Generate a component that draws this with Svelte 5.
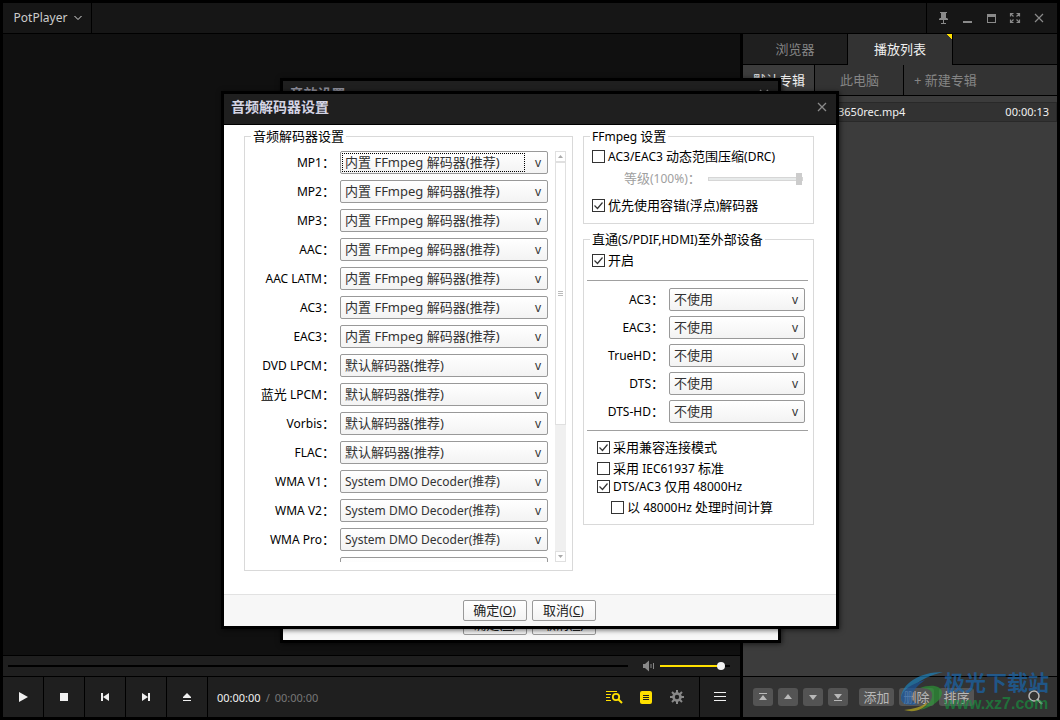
<script lang="ts">
    const full = '内置 FFmpeg 解码器(推荐)';
    const standard = '默认解码器(推荐)';
    const system = 'System DMO Decoder(推荐)';

    const decoders = [
        { name: 'MP1', value: full },
        { name: 'MP2', value: full },
        { name: 'MP3', value: full },
        { name: 'AAC', value: full },
        { name: 'AAC LATM', value: full },
        { name: 'AC3', value: full },
        { name: 'EAC3', value: full },
        { name: 'DVD LPCM', value: standard },
        { name: '蓝光 LPCM', value: standard },
        { name: 'Vorbis', value: standard },
        { name: 'FLAC', value: standard },
        { name: 'WMA V1', value: system },
        { name: 'WMA V2', value: system },
        { name: 'WMA Pro', value: system },
        { name: '', value: '' },
    ];

    const outputs = ['AC3', 'EAC3', 'TrueHD', 'DTS', 'DTS-HD'];

    const windowIcons = [
        { label: '置顶', path: 'M4 1h7v1h-1v5h1l1 1v1H8v3h2v1H5v-1h2V9H3V8l1-1h1V2H4z', fill: true },
        { label: '最小化', path: 'M3 10h9v2H3z', fill: true },
        { label: '最大化', path: 'M3 3h9v9H3zM4 6v5h7V6z', fill: true },
        { label: '全屏', path: 'M5.5 5.5l-3-3M2.5 5.5v-3h3M8.5 5.5l3-3M8.5 2.5h3v3M5.5 8.5l-3 3M2.5 8.5v3h3M8.5 8.5l3 3M11.5 8.5v3h-3', fill: false },
        { label: '关闭', path: 'M3 3l8 8M11 3l-8 8', fill: false },
    ];

    const transport = [
        { label: '播放', path: 'M3 2l9 5-9 5z' },
        { label: '停止', path: 'M3 3h8v8H3z' },
        { label: '上一个', path: 'M3 3h2v8H3zM11 3v8L5 7z' },
        { label: '下一个', path: 'M9 3h2v8H9zM3 3v8l6-4z' },
        { label: '打开', path: 'M7 3l4 4v1H3V7zM3 10h8v1H3z' },
    ];

    const moves = [
        { label: '移到顶部', path: 'M3 3h8v1H3zM7 5l4 5H3z' },
        { label: '上移', path: 'M7 4l4 5H3z' },
        { label: '下移', path: 'M3 5h8l-4 5z' },
        { label: '移到底部', path: 'M3 4h8l-4 5zM3 10h8v1H3z' },
    ];

    // latin text is set one size below the chinese text
    function runs(text: string) {
        return text.match(/[\u3000-\uffef]+|[^\u3000-\uffef]+/g) ?? [];
    }
</script>

<style>
    :global(body) {
        background: #000;
        font-family: "Noto Sans", "Noto Sans CJK SC", sans-serif;
    }

    .player, .player :global(*) {
        box-sizing: border-box;
    }

    .player {
        position: relative;
        display: flex;
        flex-direction: column;
        height: 100vh;
        border: 3px solid #000;
        overflow: hidden;
        font-size: 12px;
        line-height: 18px;
        color: #e8e8e8;
    }

    button, select, input {
        font: inherit;
        color: inherit;
        margin: 0;
    }

    button {
        display: flex;
        align-items: center;
        justify-content: center;
        padding: 0;
        border: 0;
        background: none;
        white-space: nowrap;
    }

    svg {
        display: block;
    }

    .cjk {
        font-size: 13px;
    }

    /* title bar */
    .titlebar {
        display: flex;
        flex: none;
        height: 31px;
        background: #161616;
        border-bottom: 1px solid #000;
    }
        .titlebar .app {
            width: 89px;
            gap: 7px;
            padding-left: 2px;
            border-right: 1px solid #000;
            color: #ccc;
        }
        .titlebar .tools {
            display: flex;
            align-items: center;
            margin-left: auto;
            padding: 0 6px 0 4px;
            border-left: 1px solid #000;
            color: #8a8a8a;
        }
        .tools button {
            width: 24px;
            height: 24px;
        }

    .columns {
        display: flex;
        flex: 1;
        min-height: 0;
    }

    /* video side */
    .stage {
        display: flex;
        flex-direction: column;
        flex: 1;
        border-right: 3px solid #000;
        min-width: 0;
    }
        .video {
            flex: 1;
            background: #101010;
        }
        .seekbar {
            display: flex;
            align-items: center;
            height: 22px;
            padding: 0 10px 0 5px;
            border: solid #000;
            border-width: 1px 0;
            background: #1f1f1f;
        }

    input[type="range"] {
        appearance: none;
        height: 12px;
        background: none;
    }
    input[type="range"]::-webkit-slider-thumb {
        appearance: none;
    }
        .seek {
            flex: 1;
            min-width: 0;
        }
        .seek::-webkit-slider-runnable-track {
            height: 2px;
            background: #000;
        }
        .seek::-webkit-slider-thumb {
            width: 1px;
            height: 2px;
        }
        .volume {
            width: 70px;
        }
        .volume::-webkit-slider-runnable-track {
            height: 2px;
            background: linear-gradient(90deg, #ffe000 87%, #000 87%);
        }
        .volume::-webkit-slider-thumb {
            width: 8px;
            height: 8px;
            margin-top: -3px;
            border-radius: 50%;
            background: #f0f0f0;
        }
    .speaker {
        margin: 0 5px 0 14px;
    }

    .controls {
        display: flex;
        align-items: stretch;
        height: 40px;
        background: #1f1f1f;
        color: #f0f0f0;
    }
        .controls .key {
            width: 41px;
            border-right: 1px solid #000;
        }
        .controls .menu {
            width: 41px;
            border-left: 1px solid #000;
        }
        .time {
            display: flex;
            align-items: center;
            gap: 5px;
            padding: 2px 0 0 9px;
            font-size: 11px;
        }
        .time .total {
            color: #777;
        }
        .extras {
            display: flex;
            align-items: center;
            gap: 17px;
            margin-left: auto;
            padding-right: 15px;
        }

    /* playlist side */
    .playlist {
        display: flex;
        flex-direction: column;
        width: 314px;
        background: #3c3c3c;
    }
        .tabs, .albums {
            display: flex;
            flex: none;
            height: 31px;
            background: #1f1f1f;
            font-size: 13px;
            color: #858585;
        }
        .tabs button {
            width: 105px;
            border-right: 1px solid #000;
            border-bottom: 1px solid #000;
        }
        .tabs .rest {
            flex: 1;
            border-bottom: 1px solid #000;
        }
        .tabs .active {
            padding-bottom: 2px;
            border-bottom: 0;
            background: linear-gradient(225deg, #ffe000 4px, #333 4px);
            color: #f0f0f0;
        }
        .albums {
            background: #333;
            border-bottom: 1px solid #000;
        }
        .albums button {
            padding: 0 9px 0 10px;
            border-right: 1px solid #000;
        }
        .albums .active {
            background: #3c3c3c;
            color: #f0f0f0;
        }
        .albums .pc {
            padding: 0 24px 0 25px;
        }
        .albums .new {
            border-right: 0;
        }
    .files {
        flex: 1;
        padding-top: 6px;
    }
        .file {
            display: flex;
            justify-content: space-between;
            height: 20px;
            padding: 0 7px 0 94px;
            border: 1px solid #292929;
            background: #323232;
            font-size: 11px;
            color: #f0f0f0;
        }
    .listbar {
        display: flex;
        align-items: center;
        gap: 5px;
        height: 41px;
        padding: 0 14px 0 10px;
        border-top: 1px solid #000;
        background: #333;
        color: #b8b8b8;
    }
        .listbar button {
            height: 18px;
            border-radius: 3px;
            background: #545454;
        }
        .listbar .move {
            width: 20px;
        }
        .listbar .word {
            width: 35px;
            font-size: 13px;
        }
        .listbar .first {
            margin-left: 6px;
        }
        .listbar .find {
            margin-left: auto;
            background: none;
        }

    /* dialogs float over the player */
    .layer {
        position: absolute;
        inset: -3px;
        display: grid;
        place-items: center;
    }
    .dialog {
        display: flex;
        flex-direction: column;
        border: 3px solid #000;
        background: #fff;
        box-shadow: 1px 1px 5px rgba(0, 0, 0, 0.6);
        color: #000;
    }
        .dialog.back {
            width: 501px;
            height: 565px;
        }
        .dialog.front {
            width: 618px;
        }
        .dialog header {
            display: flex;
            align-items: center;
            justify-content: space-between;
            height: 31px;
            padding: 0 8px 4px 7px;
            border-bottom: 1px solid #000;
            background: #1f1f1f;
            color: #8a8a8a;
        }
        .dialog h2 {
            margin: 0;
            font-size: 14px;
            line-height: 18px;
            color: #d4d4e4;
        }
        .back h2 {
            color: #8c8c98;
        }
        .dialog footer {
            display: flex;
            justify-content: center;
            gap: 5px;
            margin-top: auto;
            padding: 5px 2px 5px 0;
            border-top: 1px solid #e2e2e2;
            background: #f7f7f7;
        }
        .dialog footer button {
            width: 64px;
            height: 21px;
            border: 1px solid #999;
            border-radius: 2px;
            background: linear-gradient(#fff, #f3f3f3);
            color: #222;
        }

    .panes {
        display: grid;
        grid-template-columns: 329px 1fr;
        align-items: start;
        gap: 10px;
        padding: 2px 22px 23px 20px;
    }
    fieldset {
        min-width: 0;
        margin: 0;
        padding: 0;
        border: 1px solid #d9d9d9;
    }
        legend {
            margin-left: 6px;
            padding: 0 2px;
            height: 18px;
        }
        .decoders {
            display: flex;
            gap: 7px;
            padding: 6px 6px 8px 0;
        }

    .list {
        flex: 1;
        height: 411px;
        overflow: hidden;
    }
    .row {
        display: grid;
        grid-template-columns: 1fr 208px;
        align-items: center;
        gap: 5px;
        margin-bottom: 6px;
    }
        .row label {
            text-align: right;
            white-space: nowrap;
        }
        .row.output {
            grid-template-columns: 1fr 136px;
            margin-bottom: 5px;
        }

    .combo {
        display: grid;
        height: 23px;
        color: #333;
    }
        .combo > :global(*) {
            grid-area: 1 / 1;
        }
        .combo select {
            appearance: none;
            width: 100%;
            padding: 0 20px 2px 4px;
            border: 1px solid #999;
            border-radius: 2px;
            background: linear-gradient(#fff, #f3f3f3);
            font-size: 13px;
            outline: none;
        }
        .combo select.latin {
            padding-bottom: 0;
            font-size: 12px;
        }
        .combo .arrow {
            justify-self: end;
            align-self: center;
            margin-right: 7px;
            pointer-events: none;
        }
        .combo .focus {
            margin: 2px 23px 2px 2px;
            border: 1px dotted #000;
            pointer-events: none;
        }

    .scroll {
        display: flex;
        flex-direction: column;
        width: 11px;
        background: #f0f0f0;
    }
        .scroll span {
            display: flex;
            align-items: center;
            justify-content: center;
            height: 11px;
            border: 1px solid #e0e0e0;
            background: #fff;
        }
        .scroll .thumb {
            height: 263px;
        }
        .scroll .down {
            margin-top: auto;
        }

    .side {
        display: flex;
        flex-direction: column;
        gap: 6px;
    }
        .ffmpeg {
            padding: 2px 8px 9px;
        }
        .passthrough {
            padding: 3px 3px 8px;
        }
    .check {
        display: flex;
        align-items: center;
        gap: 3px;
        height: 18px;
        white-space: nowrap;
    }
        .check input {
            appearance: none;
            width: 13px;
            height: 13px;
            border: 1px solid #333;
            background: #fff;
        }
        .check input:checked {
            background: #fff url("data:image/svg+xml,%3Csvg xmlns='http://www.w3.org/2000/svg' viewBox='0 0 11 11'%3E%3Cpath d='M1.5 5.5l3 3 5-6' fill='none' stroke='%23333' stroke-width='1.2'/%3E%3C/svg%3E") center / 11px 11px;
        }
        .enable {
            padding-left: 5px;
        }
        .options {
            padding-left: 10px;
        }
        .options .spaced {
            margin-top: 3px;
        }
        .options .nested {
            padding-left: 14px;
        }
    .level {
        display: flex;
        align-items: center;
        justify-content: space-between;
        margin: 4px 0 8px;
        padding: 0 2px 0 32px;
        color: #a0a0a0;
    }
        .level input {
            width: 95px;
        }
        .level input::-webkit-slider-runnable-track {
            height: 4px;
            border: 1px solid #d6d6d6;
            background: #e7eaea;
        }
        .level input::-webkit-slider-thumb {
            width: 6px;
            height: 12px;
            margin-top: -5px;
            background: #ccc;
        }
    .rows {
        margin: 11px 2px 7px 0;
        padding: 7px 3px 2px 0;
        border: solid #a0a0a0;
        border-width: 1px 0;
    }

    /* site mark in the corner */
    .mark {
        position: absolute;
        right: 8px;
        bottom: 4px;
        display: flex;
        align-items: center;
        opacity: 0.65;
        pointer-events: none;
    }
        .mark div {
            display: flex;
            flex-direction: column;
        }
        .mark b {
            font-size: 21px;
            line-height: 25px;
            color: #1769b5;
        }
        .mark i {
            font: bold 16px/18px "Liberation Sans", sans-serif;
            color: #17913f;
        }
</style>

{#snippet mixed(text: string)}
    {#each runs(text) as run}<span class:cjk={run.charCodeAt(0) > 0x2fff}>{run}</span>{/each}
{/snippet}

{#snippet combo(id: string, value: string, focused: boolean)}
    <span class="combo">
        <select {id} class:latin={value === system}>
            <option>{value}</option>
        </select>
        {#if focused}<span class="focus"></span>{/if}
        {#if value}<span class="arrow">v</span>{/if}
    </span>
{/snippet}

{#snippet check(text: string, checked: boolean, cls: string)}
    <label class="check {cls}">
        <input type="checkbox" {checked}>
        <span>{@render mixed(text)}</span>
    </label>
{/snippet}

{#snippet cross()}
    <svg viewBox="0 0 12 12" width="12" height="12"><path d="M2 2l8 8M10 2l-8 8" fill="none" stroke="currentColor" stroke-width="1.3"/></svg>
{/snippet}

{#snippet buttons()}
    <footer>
        <button><span><span class="cjk">确定</span>(<u>O</u>)</span></button>
        <button><span><span class="cjk">取消</span>(<u>C</u>)</span></button>
    </footer>
{/snippet}

<div class="player">
    <div class="titlebar">
        <button class="app">
            PotPlayer
            <svg viewBox="0 0 8 6" width="8" height="6"><path d="M.5 1L4 4.5 7.5 1" fill="none" stroke="#ddd"/></svg>
        </button>
        <div class="tools">
            {#each windowIcons as icon}
                <button aria-label={icon.label}>
                    <svg viewBox="0 0 14 14" width="14" height="14">
                        <path d={icon.path} fill={icon.fill ? 'currentColor' : 'none'} fill-rule="evenodd" stroke={icon.fill ? 'none' : 'currentColor'} stroke-width="1.2"/>
                    </svg>
                </button>
            {/each}
        </div>
    </div>

    <div class="columns">
        <div class="stage">
            <div class="video"></div>
            <div class="seekbar">
                <input class="seek" type="range" min="0" max="100" value="0" aria-label="进度">
                <svg class="speaker" viewBox="0 0 13 12" width="13" height="12">
                    <path d="M1 4h2l4-3.5v11L3 8H1z" fill="#888"/>
                    <path d="M9 4v4M11.5 3v6" stroke="#888"/>
                </svg>
                <input class="volume" type="range" min="0" max="100" value="92" aria-label="音量">
            </div>
            <div class="controls">
                {#each transport as key}
                    <button class="key" aria-label={key.label}>
                        <svg viewBox="0 0 14 14" width="14" height="14"><path d={key.path} fill="currentColor"/></svg>
                    </button>
                {/each}
                <div class="time"><span>00:00:00</span><span class="total">/</span><span class="total">00:00:00</span></div>
                <div class="extras">
                    <button aria-label="搜索列表">
                        <svg viewBox="0 0 17 14" width="17" height="14" fill="none" stroke="#ffe000">
                            <path d="M0 1.5h11M0 4.5h5M0 7.5h4M0 10.5h5"/>
                            <circle cx="10" cy="7" r="3.2" stroke-width="1.8"/>
                            <path d="M12 9l4 4" stroke-width="2"/>
                        </svg>
                    </button>
                    <button aria-label="播放列表">
                        <svg viewBox="0 0 13 14" width="13" height="14">
                            <rect y="1" width="12" height="13" rx="2" fill="#ffe000"/>
                            <path d="M3 5.5h6M3 7.5h6M3 9.5h6" stroke="#1f1f1f"/>
                        </svg>
                    </button>
                    <button aria-label="选项">
                        <svg viewBox="0 0 14 14" width="14" height="14" fill="none" stroke="#888">
                            <circle cx="7" cy="7" r="3.5" stroke-width="2.6"/>
                            <path d="M7 0v3M7 11v3M0 7h3M11 7h3M2 2l2 2M10 10l2 2M12 2l-2 2M4 10l-2 2" stroke-width="2"/>
                        </svg>
                    </button>
                </div>
                <button class="menu" aria-label="菜单">
                    <svg viewBox="0 0 12 10" width="12" height="10"><path d="M0 .5h12M0 4.5h12M0 8.5h12" stroke="currentColor"/></svg>
                </button>
            </div>
        </div>

        <div class="playlist">
            <div class="tabs">
                <button>浏览器</button>
                <button class="active">播放列表</button>
                <span class="rest"></span>
            </div>
            <div class="albums">
                <button class="active">默认专辑</button>
                <button class="pc">此电脑</button>
                <button class="new">+ 新建专辑</button>
            </div>
            <div class="files">
                <div class="file"><span>3650rec.mp4</span><span>00:00:13</span></div>
            </div>
            <div class="listbar">
                {#each moves as move}
                    <button class="move" aria-label={move.label}>
                        <svg viewBox="0 0 14 14" width="14" height="14"><path d={move.path} fill="currentColor"/></svg>
                    </button>
                {/each}
                <button class="word first">添加</button>
                <button class="word">删除</button>
                <button class="word">排序</button>
                <button class="find" aria-label="搜索">
                    <svg viewBox="0 0 16 16" width="16" height="16" fill="none" stroke="currentColor">
                        <circle cx="7" cy="7" r="5" stroke-width="1.5"/>
                        <path d="M10.5 10.5l4.5 4.5" stroke-width="2"/>
                    </svg>
                </button>
            </div>
        </div>
    </div>

    <div class="mark">
        <svg viewBox="0 0 44 42" width="44" height="42">
            <path d="M43 1C20 1 2 12 1 27c0 3 2 5 4 6 0-14 14-26 38-32z" fill="#1b86c4"/>
            <path d="M1 26c0 8 8 9 17 7-5-1-7-4-6-8 1-6 6-11 13-16C12 13 3 18 1 26z" fill="#1658a5"/>
            <path d="M20 17c10-4 22-3 22 5 0 7-10 14-22 17 8-5 13-10 12-16 0-4-5-6-12-6z" fill="#2a9a35"/>
            <path d="M28 31c-7 5-14 7-24 8 10 3 20 0 24-8z" fill="#c8b81e"/>
        </svg>
        <div><b>极光下载站</b><i>www.xz7.com</i></div>
    </div>

    <div class="layer">
        <section class="dialog back">
            <header><h2>音效设置</h2>{@render cross()}</header>
            {@render buttons()}
        </section>
    </div>

    <div class="layer">
        <section class="dialog front">
            <header>
                <h2>音频解码器设置</h2>
                <button aria-label="关闭">{@render cross()}</button>
            </header>
            <div class="panes">
                <fieldset>
                    <legend>{@render mixed('音频解码器设置')}</legend>
                    <div class="decoders">
                        <div class="list">
                            {#each decoders as decoder, i}
                                <div class="row">
                                    <label for="decoder-{i}">{@render mixed(decoder.name && decoder.name + '：')}</label>
                                    {@render combo(`decoder-${i}`, decoder.value, i === 0)}
                                </div>
                            {/each}
                        </div>
                        <div class="scroll">
                            <span><svg viewBox="0 0 5 3" width="5" height="3"><path d="M0 3h5L2.5 0z" fill="#aaa"/></svg></span>
                            <span class="thumb"><svg viewBox="0 0 5 5" width="5" height="5"><path d="M0 .5h5M0 2.5h5M0 4.5h5" stroke="#bbb"/></svg></span>
                            <span class="down"><svg viewBox="0 0 5 3" width="5" height="3"><path d="M0 0h5L2.5 3z" fill="#aaa"/></svg></span>
                        </div>
                    </div>
                </fieldset>

                <div class="side">
                    <fieldset>
                        <legend>{@render mixed('FFmpeg 设置')}</legend>
                        <div class="ffmpeg">
                            {@render check('AC3/EAC3 动态范围压缩(DRC)', false, '')}
                            <div class="level">
                                <label for="level">{@render mixed('等级(100%)：')}</label>
                                <input id="level" type="range" min="0" max="100" value="100" disabled>
                            </div>
                            {@render check('优先使用容错(浮点)解码器', true, '')}
                        </div>
                    </fieldset>
                    <fieldset>
                        <legend>{@render mixed('直通(S/PDIF,HDMI)至外部设备')}</legend>
                        <div class="passthrough">
                            {@render check('开启', true, 'enable')}
                            <div class="rows">
                                {#each outputs as output}
                                    <div class="row output">
                                        <label for="out-{output}">{@render mixed(output + '：')}</label>
                                        {@render combo(`out-${output}`, '不使用', false)}
                                    </div>
                                {/each}
                            </div>
                            <div class="options">
                                {@render check('采用兼容连接模式', true, '')}
                                {@render check('采用 IEC61937 标准', false, 'spaced')}
                                {@render check('DTS/AC3 仅用 48000Hz', true, '')}
                                {@render check('以 48000Hz 处理时间计算', false, 'spaced nested')}
                            </div>
                        </div>
                    </fieldset>
                </div>
            </div>
            {@render buttons()}
        </section>
    </div>
</div>
